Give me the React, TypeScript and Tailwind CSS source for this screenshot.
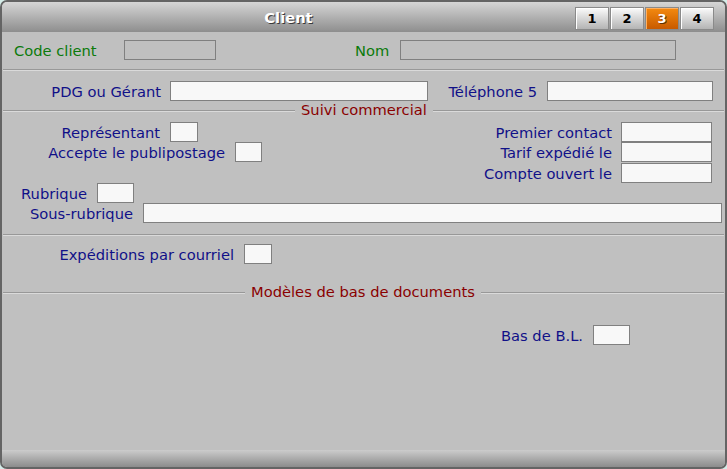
const font = "font-['DejaVu_Sans','Verdana',sans-serif]";

function Box({ className }: { className: string }) {
  return <div className={`h-[20px] shrink-0 border border-[#808080] ${className}`} />;
}

function Label({ className, children }: { className: string; children: React.ReactNode }) {
  return (
    <span className={`shrink-0 whitespace-nowrap pr-[10px] text-right text-[#101088] ${className}`}>
      {children}
    </span>
  );
}

function Rule() {
  return <div className="mx-[1px] h-[2px] border-t border-b border-t-[#989898] border-b-[#dadada]" />;
}

function Heading({ lead, title }: { lead: string; title: string }) {
  return (
    <div className="flex h-[20px] items-center">
      <div className={`ml-[1px] h-[2px] shrink-0 border-t border-b border-t-[#989898] border-b-[#dadada] ${lead}`} />
      <span className="mb-[3px] whitespace-nowrap px-[6px] text-[#8a0000]">{title}</span>
      <div className="mr-[1px] h-[2px] flex-1 border-t border-b border-t-[#989898] border-b-[#dadada]" />
    </div>
  );
}

function Tab({ n, active }: { n: string; active?: boolean }) {
  return (
    <div
      className={
        active
          ? "flex h-[23px] w-[34px] items-center justify-center border border-[#8a8a8a] bg-gradient-to-b from-[#f48a10] to-[#c85a00] text-[13px] font-bold text-white shadow-[inset_1px_1px_0_#ffb060] [text-shadow:1px_1px_0_#603000]"
          : "flex h-[23px] w-[34px] items-center justify-center border border-[#8a8a8a] bg-gradient-to-b from-[#fbfbfb] to-[#b4b4b4] text-[13px] font-bold text-black shadow-[inset_1px_1px_0_#ffffff]"
      }
    >
      {n}
    </div>
  );
}

export default function App() {
  return (
    <div className={`h-[469px] w-[727px] bg-[#d4ece8] text-[14.7px] leading-[17px] ${font}`}>
      <div className="flex h-full flex-col overflow-hidden rounded-[7px] border-2 border-[#646464] bg-[#c0c0c0]">
        {/* Title bar */}
        <div className="flex h-[30px] shrink-0 items-center bg-gradient-to-b from-[#d6d6d6] to-[#8e8e8e]">
          <div className="flex-1 text-center font-bold text-white [text-shadow:1px_1px_0_#3a3a3a]">Client</div>
          <div className="mr-[11px] mt-[2px] flex gap-[1px]">
            <Tab n="1" />
            <Tab n="2" />
            <Tab n="3" active />
            <Tab n="4" />
          </div>
        </div>

        {/* Code / Nom */}
        <div className="mt-[8px] flex h-[20px] items-center">
          <span className="ml-[12px] w-[110px] shrink-0 text-[#0b7a0b]">Code client</span>
          <Box className="w-[92px]" />
          <span className="ml-[139px] w-[45px] shrink-0 text-[#0b7a0b]">Nom</span>
          <Box className="w-[276px]" />
        </div>

        <div className="mt-[9px]">
          <Rule />
        </div>

        <div className="mt-[10px] flex h-[20px] items-center">
          <Label className="w-[168px] !pr-[9px]">PDG ou Gérant</Label>
          <Box className="w-[258px] bg-[#f8f8f8]" />
          <Label className="w-[119px]">Téléphone 5</Label>
          <Box className="w-[166px] bg-[#f8f8f8]" />
        </div>

        <Heading lead="w-[292px]" title="Suivi commercial" />

        <div className="mt-[1px] flex">
          <div className="flex flex-col">
            <div className="flex h-[20px] items-center">
              <Label className="w-[168px]">Représentant</Label>
              <Box className="w-[28px] bg-[#f8f8f8]" />
            </div>
            <div className="flex h-[20px] items-center">
              <Label className="w-[233px]">Accepte le publipostage</Label>
              <Box className="w-[27px] bg-[#f8f8f8]" />
            </div>
          </div>
          <div className="ml-auto mr-[13px] flex flex-col">
            <div className="flex h-[20px] items-center justify-end">
              <Label className="!pr-[9px]">Premier contact</Label>
              <Box className="w-[91px] bg-[#f8f8f8]" />
            </div>
            <div className="flex h-[20px] items-center justify-end">
              <Label className="!pr-[9px]">Tarif expédié le</Label>
              <Box className="w-[91px] bg-[#f8f8f8]" />
            </div>
            <div className="mt-[1px] flex h-[20px] items-center justify-end">
              <Label className="!pr-[9px]">Compte ouvert le</Label>
              <Box className="w-[91px] bg-[#f8f8f8]" />
            </div>
          </div>
        </div>

        <div className="flex h-[20px] items-center">
          <Label className="w-[95px]">Rubrique</Label>
          <Box className="w-[37px] bg-[#f8f8f8]" />
        </div>
        <div className="flex h-[20px] items-center">
          <Label className="w-[141px]">Sous-rubrique</Label>
          <Box className="w-[579px] bg-[#f8f8f8]" />
        </div>

        <div className="mt-[11px]">
          <Rule />
        </div>

        <div className="mt-[8px] flex h-[20px] items-center">
          <Label className="w-[242px]">Expéditions par courriel</Label>
          <Box className="w-[28px] bg-[#f8f8f8]" />
        </div>

        <div className="mt-[19px]">
          <Heading lead="w-[242px]" title="Modèles de bas de documents" />
        </div>

        <div className="mt-[22px] flex h-[20px] items-center">
          <Label className="w-[591px]">Bas de B.L.</Label>
          <Box className="w-[37px] bg-[#f8f8f8]" />
        </div>

        <div className="flex-1" />

        {/* Bottom bar */}
        <div className="h-[17px] shrink-0 bg-gradient-to-b from-[#cccccc] to-[#8c8c8c]" />
      </div>
    </div>
  );
}
